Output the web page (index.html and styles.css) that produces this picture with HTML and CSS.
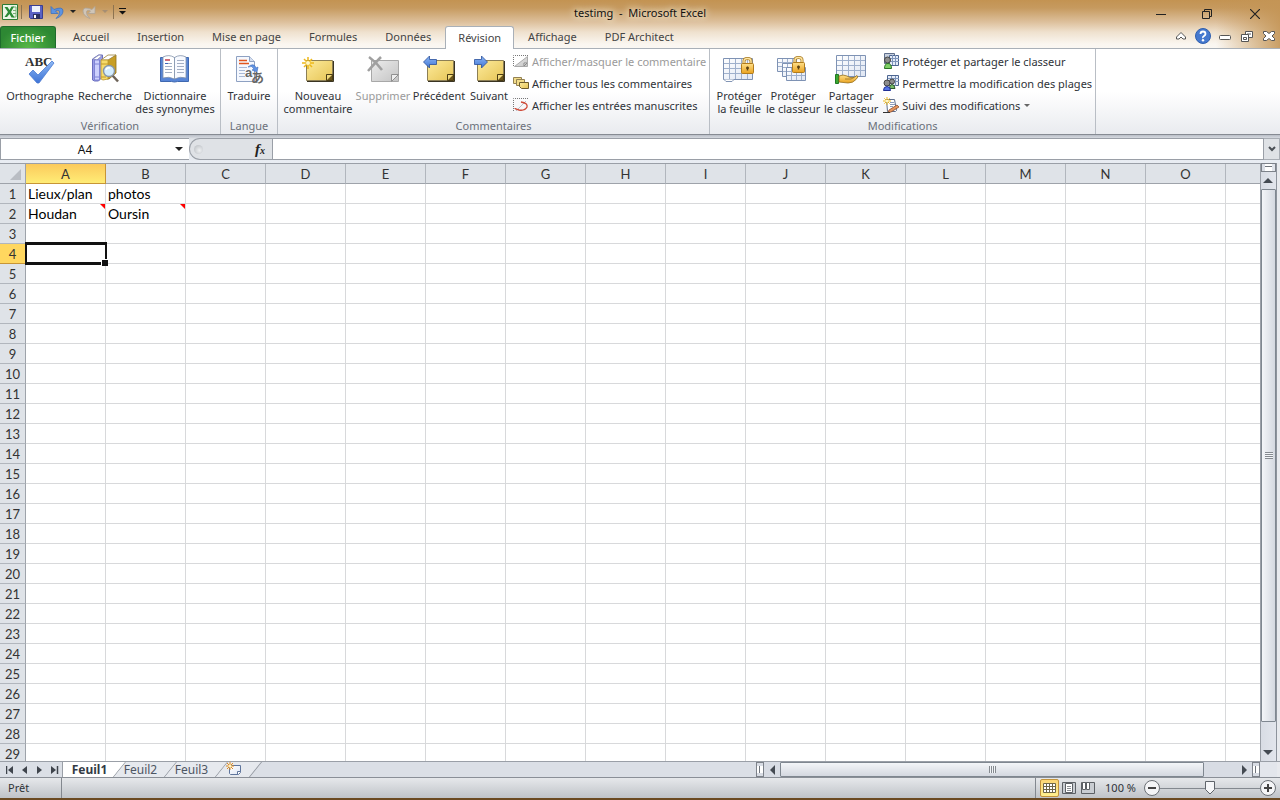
FILE: index.html
```html
<!DOCTYPE html>
<html lang="fr">
<head>
    <meta charset="UTF-8">
    <meta name="viewport" content="width=device-width, initial-scale=1.0">
    <title>testimg - Microsoft Excel</title>
    <link rel="stylesheet" href="styles.css">
</head>
<body>
    <!-- Shared shapes and gradients -->
    <svg class="defs" aria-hidden="true">
        <defs>
            <linearGradient id="noteFill" x1="0" y1="0" x2="1" y2="1">
                <stop offset="0" stop-color="#fdeb9c"/>
                <stop offset="1" stop-color="#e6c455"/>
            </linearGradient>
            <linearGradient id="greyFill" x1="0" y1="0" x2="1" y2="1">
                <stop offset="0" stop-color="#ececec"/>
                <stop offset="1" stop-color="#c4c4c4"/>
            </linearGradient>
            <linearGradient id="blueFill" x1="0" y1="0" x2="0" y2="1">
                <stop offset="0" stop-color="#8db8f4"/>
                <stop offset="1" stop-color="#3f74d6"/>
            </linearGradient>
            <linearGradient id="goldFill" x1="0" y1="0" x2="0" y2="1">
                <stop offset="0" stop-color="#ffe08a"/>
                <stop offset="1" stop-color="#e9a11e"/>
            </linearGradient>
            <linearGradient id="sheetFill" x1="0" y1="0" x2="1" y2="1">
                <stop offset="0" stop-color="#ffffff"/>
                <stop offset="1" stop-color="#dfe6f3"/>
            </linearGradient>
            <symbol id="note" viewBox="0 0 28 22">
                <path d="M.5.5h26v20H.5z" fill="url(#noteFill)" stroke="#8c7f55"/>
                <path d="M27.500 1v20.500H1" fill="none" stroke="#3a3422"/>
                <path d="M20.500 20.500v-6h6v6z" fill="#6b5519" stroke="#4b3d14"/>
                <path d="M21 15h5l-5 5z" fill="#f2da7c"/>
            </symbol>
            <symbol id="lock" viewBox="0 0 13 17">
                <path d="M3 8V4q0-2.500 3.500-2.500T10 4v4" fill="none" stroke="#a87a22" stroke-width="3"/>
                <path d="M3 8V4q0-2.500 3.500-2.500T10 4v4" fill="none" stroke="#ffe6a0" stroke-width="1.400"/>
                <rect x=".5" y="6.500" width="12" height="10" rx="1" fill="url(#goldFill)" stroke="#b27c1c"/>
                <path d="M6.500 9.500v4M5 11h3" stroke="#5b4010" stroke-width="1.500"/>
            </symbol>
            <symbol id="spark" viewBox="0 0 12 12">
                <path d="M6 0v12M0 6h12M2 2l8 8M10 2l-8 8" stroke="#edb81b" stroke-width="1.500"/>
                <circle cx="6" cy="6" r="2" fill="#fff8c8"/>
            </symbol>
            <symbol id="grid" viewBox="0 0 30 22">
                <path d="M.5.5h29v21H.5z" fill="url(#sheetFill)" stroke="#7e92b4"/>
                <path d="M1 5.500h28M1 10.500h28M1 15.500h28M6.500 1v20M12.500 1v20M18.500 1v20M24.500 1v20" stroke="#9fb0cc" fill="none"/>
            </symbol>
            <symbol id="gridSmall" viewBox="0 0 20 14">
                <path d="M.5.5h19v13H.5z" fill="url(#sheetFill)" stroke="#7e92b4"/>
                <path d="M1 4.500h18M1 8.500h18M5.500 1v12M10.500 1v12M15.500 1v12" stroke="#9fb0cc" fill="none"/>
            </symbol>
        </defs>
    </svg>

    <header class="top">
        <div class="title-bar">
            <div class="quick-access">
                <svg class="app-icon" width="16" height="16" viewBox="0 0 16 16">
                    <path d="M.5.5h15v15H.5z" fill="#eaf5e6" stroke="#2c7a33"/>
                    <path d="M11 3h3v10h-3M11 6.500h3M11 9.500h3" fill="none" stroke="#77b074"/>
                    <path d="M2.500 3h3l2 3 2-3.500h2.500L9 8l3.500 5.500h-3l-2-3.500-2.500 3H2.500L6 8z" fill="#2c8a35"/>
                </svg>
                <span class="qa-sep"></span>
                <button type="button" class="qa-btn" aria-label="Enregistrer">
                    <svg width="14" height="14" viewBox="0 0 14 14">
                        <path d="M.5.5h13v13h-12l-1-1z" fill="#5b62c4" stroke="#3a3f92"/>
                        <path d="M3 1h8v6H3z" fill="#eef2fb"/>
                        <path d="M4 9h7v5H4z" fill="#2c3060"/>
                        <path d="M5 10h2v3H5z" fill="#fff"/>
                    </svg>
                </button>
                <button type="button" class="qa-btn" aria-label="Annuler">
                    <svg width="14" height="14" viewBox="0 0 14 14">
                        <path d="M1 1.500v7h7L5.500 6q3.500-2 4 1t-3.500 6.500Q13 11 13 6T4 4.500z" fill="#5c93e2" stroke="#3f70bd" stroke-width=".8"/>
                    </svg>
                </button>
                <button type="button" class="qa-arrow" aria-label="Liste Annuler"><span class="caret"></span></button>
                <button type="button" class="qa-btn" aria-label="Répéter">
                    <svg width="14" height="14" viewBox="0 0 14 14">
                        <path d="M13 1.500v7H6L8.500 6Q5 4 4.500 7T8 13.500Q1 11 1 6t9-1.500z" fill="#cfc5b8" stroke="#aea395" stroke-width=".8"/>
                    </svg>
                </button>
                <button type="button" class="qa-arrow" aria-label="Liste Répéter"><span class="caret dim"></span></button>
                <span class="qa-sep"></span>
                <button type="button" class="qa-arrow" aria-label="Personnaliser la barre">
                    <svg width="7" height="7" viewBox="0 0 7 7"><path d="M0 .5h7" stroke="#111"/><path d="M0 3h7L3.500 6.500z" fill="#111"/></svg>
                </button>
            </div>
            <h1 class="title">testimg&nbsp; -&nbsp; Microsoft Excel</h1>
            <div class="window-controls">
                <button type="button" aria-label="Réduire">
                    <svg width="10" height="10" viewBox="0 0 10 10"><path d="M0 5.500h10" stroke="#222"/></svg>
                </button>
                <button type="button" aria-label="Restaurer">
                    <svg width="10" height="10" viewBox="0 0 10 10"><path d="M.5 2.500h7v7h-7zM2.500 2V.5h7v7H8" fill="none" stroke="#222"/></svg>
                </button>
                <button type="button" aria-label="Fermer">
                    <svg width="10" height="10" viewBox="0 0 10 10"><path d="M0 0l10 10M10 0L0 10" stroke="#222" stroke-width="1.200"/></svg>
                </button>
            </div>
        </div>

        <nav class="tabs">
            <a href="#" class="file-tab">Fichier</a>
            <a href="#">Accueil</a>
            <a href="#">Insertion</a>
            <a href="#">Mise en page</a>
            <a href="#">Formules</a>
            <a href="#">Données</a>
            <a href="#" class="active">Révision</a>
            <a href="#">Affichage</a>
            <a href="#">PDF Architect</a>
            <div class="tab-tools">
                <button type="button" aria-label="Réduire le ruban">
                    <svg width="10" height="8" viewBox="0 0 10 8"><path d="M.5 5L5 .5 9.500 5v2H7L5 5 3 7H.5z" fill="#fff" stroke="#555"/></svg>
                </button>
                <button type="button" aria-label="Aide">
                    <svg width="16" height="16" viewBox="0 0 16 16">
                        <circle cx="8" cy="8" r="7.500" fill="#4679cf" stroke="#2f5fae"/>
                        <path d="M5.500 6q0-2.500 2.500-2.500T10.500 6Q10.500 7 9 8T8 10" fill="none" stroke="#fff" stroke-width="1.800"/>
                        <circle cx="8" cy="12.200" r="1.200" fill="#fff"/>
                    </svg>
                </button>
                <button type="button" aria-label="Réduire la fenêtre">
                    <svg width="12" height="10" viewBox="0 0 12 10"><rect x=".5" y="4.500" width="11" height="4" rx="1" fill="#fff" stroke="#555"/></svg>
                </button>
                <button type="button" aria-label="Restaurer la fenêtre">
                    <svg width="12" height="11" viewBox="0 0 12 11"><path d="M4.500.5h7v6h-7z" fill="#fff" stroke="#555"/><path d="M6 3h4" stroke="#555"/><path d="M.5 3.500h7v7h-7z" fill="#fff" stroke="#555"/><path d="M2.500 6.500h3v2h-3z" fill="#fff" stroke="#555"/></svg>
                </button>
                <button type="button" aria-label="Fermer la fenêtre">
                    <svg width="12" height="10" viewBox="0 0 12 10"><path d="M.5.500h3L6 2.500 8.500.5h3v2L9 5l2.500 2.500v2h-3L6 7.500 3.500 9.500h-3v-2L3 5 .5 2.500z" fill="#fff" stroke="#555"/></svg>
                </button>
            </div>
        </nav>
    </header>

    <section class="ribbon">
        <div class="group">
            <div class="group-body">
                <button type="button" class="big w-74">
                    <svg viewBox="0 0 32 32">
                        <text x="1" y="14" class="abc">ABC</text>
                        <path d="M5 22l4-4 5 5L28 9l2 2-15 20h-2z" fill="url(#blueFill)" stroke="#4a7ad2" stroke-width=".8"/>
                    </svg>
                    <span>Orthographe</span>
                </button>
                <button type="button" class="big w-56">
                    <svg viewBox="0 0 32 32">
                        <path d="M3.500 7l6-4h4v22l-4 4h-4l-2-1z" fill="#9a9de8" stroke="#6c70c0"/>
                        <path d="M4 7l6-4 3 .5L8 8z" fill="#fff" stroke="#8488b5" stroke-width=".8"/>
                        <path d="M5.500 8h5v20h-5z" fill="#cdd1fd" stroke="#7478cb" stroke-width=".8"/>
                        <path d="M5.500 12h5M5.500 25h5" stroke="#8085d8"/>
                        <path d="M18 8l9-5v18l-7 6h-2z" fill="#c79e25" stroke="#8f6f1a" stroke-width=".8"/>
                        <path d="M12 8l7-5h8l-8 5z" fill="#fff" stroke="#9a8038" stroke-width=".8"/>
                        <path d="M12 8h7v19l-5 1-2-1z" fill="#f6db6a" stroke="#b9952c" stroke-width=".8"/>
                        <path d="M12 12h7M12 25h5" stroke="#c39a28"/>
                        <path d="M23.500 23.500l5.500 6" stroke="#6d6358" stroke-width="2.500"/>
                        <circle cx="20" cy="19" r="5.500" fill="#d3edff" stroke="#8795a5" stroke-width="1.400"/>
                        <path d="M17 18q1-3 4-2" stroke="#fff" stroke-width="1.500" fill="none"/>
                    </svg>
                    <span>Recherche</span>
                </button>
                <button type="button" class="big w-84">
                    <svg viewBox="0 0 32 32">
                        <path d="M1.500 5.500h28v24h-11l-3 .5-3-.5h-11z" fill="#5785d6" stroke="#3f68b0"/>
                        <path d="M4 5q6-3 11.500.5V27Q10 24 4 26z" fill="#fff" stroke="#8292ab" stroke-width=".8"/>
                        <path d="M27 5q-6-3-11.500.5V27Q21 24 27 26z" fill="#f8faff" stroke="#8292ab" stroke-width=".8"/>
                        <path d="M6 11.500h7M6 14.500h7M6 17.500h7M6 20.500h7M18 8.500h7M18 11.500h7M18 14.500h7M18 17.500h7M18 20.500h7" stroke="#a3afc4"/>
                        <path d="M6 8h5" stroke="#c23c4d" stroke-width="1.500"/>
                        <path d="M6 11.500h3" stroke="#3d66b8"/>
                    </svg>
                    <span>Dictionnaire<br>des synonymes</span>
                </button>
            </div>
            <div class="group-label">Vérification</div>
        </div>

        <div class="group">
            <div class="group-body">
                <button type="button" class="big w-50">
                    <svg viewBox="0 0 32 32">
                        <path d="M3.500 4.500h13l5 5v20h-18z" fill="#f5f8fe" stroke="#8ea1c2"/>
                        <path d="M16.500 4.500v5h5" fill="#d5dff0" stroke="#8ea1c2"/>
                        <path d="M6 8.500h8M6 11.500h10" stroke="#e2551d" stroke-width="1.600"/>
                        <path d="M6 15.500h8M6 18.500h6M6 21.500h6M6 24.500h6" stroke="#a9b9d6"/>
                        <path d="M15 15q6-5 8 1l2-1-1 5-5-2 2-1q-2-4-6-2z" fill="#6093e4" stroke="#3a69b9" stroke-width=".6"/>
                        <text x="12" y="25" class="glyph-a">a</text>
                        <text x="18" y="30" class="glyph-kana">あ</text>
                    </svg>
                    <span>Traduire</span>
                </button>
            </div>
            <div class="group-label">Langue</div>
        </div>

        <div class="group">
            <div class="group-body">
                <button type="button" class="big w-74">
                    <svg viewBox="0 0 32 32">
                        <use href="#note" x="4" y="8" width="28" height="22"/>
                        <use href="#spark" x="0" y="5" width="12" height="12"/>
                    </svg>
                    <span>Nouveau<br>commentaire</span>
                </button>
                <button type="button" class="big w-56" disabled>
                    <svg viewBox="0 0 32 32">
                        <path d="M4.500 8.500h27v21h-27z" fill="url(#greyFill)" stroke="#a8a8a8"/>
                        <path d="M24.500 29.500v-7h7z" fill="#eee" stroke="#909090"/>
                        <path d="M2 5q7 5 13 13M14 5Q9 10 1 19" stroke="#a0a0a0" stroke-width="2.500" fill="none"/>
                    </svg>
                    <span>Supprimer</span>
                </button>
                <button type="button" class="big w-56">
                    <svg viewBox="0 0 32 32">
                        <use href="#note" x="4" y="8" width="28" height="22"/>
                        <path d="M.5 10l6-6v3.500h7v5h-7V16z" fill="url(#blueFill)" stroke="#294f9b" stroke-width=".8"/>
                    </svg>
                    <span>Précédent</span>
                </button>
                <button type="button" class="big w-44">
                    <svg viewBox="0 0 32 32">
                        <use href="#note" x="4" y="8" width="28" height="22"/>
                        <path d="M14.500 10l-6-6v3.500h-7v5h7V16z" fill="url(#blueFill)" stroke="#294f9b" stroke-width=".8"/>
                    </svg>
                    <span>Suivant</span>
                </button>
                <div class="small-list">
                    <button type="button" class="small" disabled>
                        <svg viewBox="0 0 16 16">
                            <path d="M.5 13V2.500H15" fill="none" stroke="#777" stroke-dasharray="1 1"/>
                            <path d="M1.500 13.500l13-10v10z" fill="url(#greyFill)" stroke="#aaa"/>
                            <path d="M11 13v-3h3z" fill="#fff" stroke="#888"/>
                        </svg>
                        <span>Afficher/masquer le commentaire</span>
                    </button>
                    <button type="button" class="small">
                        <svg viewBox="0 0 16 16">
                            <path d="M.5 2.500h8v6h-8z" fill="#f3dd8a" stroke="#948253"/>
                            <path d="M3.500 4.500h8v6h-8z" fill="#f3dd8a" stroke="#948253"/>
                            <path d="M6.500 7.500h9v6h-7l-2-2z" fill="url(#noteFill)" stroke="#6d5c2b"/>
                        </svg>
                        <span>Afficher tous les commentaires</span>
                    </button>
                    <button type="button" class="small">
                        <svg viewBox="0 0 16 16">
                            <path d="M.5 14V1.500H15" fill="none" stroke="#777" stroke-dasharray="1 1"/>
                            <path d="M3 14L13 4" stroke="#b9bfc9"/>
                            <path d="M8 5q7 1 6 5-2 4-8 3-4-1-4-2" fill="none" stroke="#cf4a38" stroke-width="1.400"/>
                        </svg>
                        <span>Afficher les entrées manuscrites</span>
                    </button>
                </div>
            </div>
            <div class="group-label">Commentaires</div>
        </div>

        <div class="group">
            <div class="group-body">
                <button type="button" class="big w-52">
                    <svg viewBox="0 0 32 32">
                        <use href="#grid" x="0" y="6" width="30" height="22"/>
                        <path d="M1 27.500l2 2h6l2-2" fill="#fff" stroke="#8295b5"/>
                        <use href="#lock" x="18" y="5" width="13" height="17"/>
                    </svg>
                    <span>Protéger<br>la feuille</span>
                </button>
                <button type="button" class="big w-56">
                    <svg viewBox="0 0 32 32">
                        <use href="#gridSmall" x="0" y="6" width="20" height="14"/>
                        <use href="#gridSmall" x="5" y="11" width="20" height="14"/>
                        <use href="#gridSmall" x="9" y="15" width="20" height="14"/>
                        <use href="#lock" x="15" y="4" width="13" height="17"/>
                    </svg>
                    <span>Protéger<br>le classeur</span>
                </button>
                <button type="button" class="big w-60">
                    <svg viewBox="0 0 32 32">
                        <use href="#grid" x="1" y="3" width="30" height="22"/>
                        <path d="M.5 22.500h3v9h-3z" fill="#3aa832" stroke="#1f7a22"/>
                        <path d="M4 24q4-2 8 0l3 1.500h4l3-2q2 1-1 4-3 3.500-8 3.500l-9-1z" fill="url(#goldFill)" stroke="#94701f" stroke-width=".8"/>
                        <path d="M10 27h6l3-1.500" fill="none" stroke="#94701f" stroke-width=".8"/>
                    </svg>
                    <span>Partager<br>le classeur</span>
                </button>
                <div class="small-list">
                    <button type="button" class="small">
                        <svg viewBox="0 0 16 16">
                            <path d="M1.500.5h10v10h-10z" fill="#c6cfdd" stroke="#5f6f8c"/>
                            <path d="M6.500 2.500h9v10h-9z" fill="#e5ecf8" stroke="#4c6590"/>
                            <path d="M6 5.500h10M6 8.500h10M9.500 2v10M12.500 2v10" stroke="#7d94ba"/>
                            <circle cx="4.500" cy="7" r="3" fill="#8d8d8d" stroke="#444"/>
                            <path d="M1.500 15.500q0-5 3.500-5t3.500 5z" fill="#7fd065" stroke="#2b7424"/>
                        </svg>
                        <span>Protéger et partager le classeur</span>
                    </button>
                    <button type="button" class="small">
                        <svg viewBox="0 0 16 16">
                            <path d="M4.500.5h11v10h-11z" fill="#e5ecf8" stroke="#4c6590"/>
                            <path d="M5 3.500h11M5 6.500h11M8.500 1v10M12.500 1v10" stroke="#7d94ba"/>
                            <circle cx="9" cy="6.500" r="2.500" fill="#8d8d8d" stroke="#444"/>
                            <path d="M6.500 13.500q0-4 2.500-4t3 4z" fill="#79bd6a" stroke="#2d5a2b"/>
                            <circle cx="4" cy="8" r="3" fill="#8d8d8d" stroke="#444"/>
                            <path d="M.5 15.500q0-4 3.500-4t3.500 4z" fill="#5576e6" stroke="#1f2f96"/>
                        </svg>
                        <span>Permettre la modification des plages</span>
                    </button>
                    <button type="button" class="small">
                        <svg viewBox="0 0 16 16">
                            <path d="M3.500 2.500h8l2 11-1 1h-8z" fill="#fff" stroke="#5f6f8c"/>
                            <path d="M7 5.500h4M7 7.500h5M7 9.500h3" stroke="#8c9dbb"/>
                            <path d="M6 13l8-5 2 2-8 5-3 .5z" fill="#e5955d" stroke="#8d4f2c" stroke-width=".8"/>
                            <use href="#spark" x="0" y="0" width="8" height="8"/>
                            <path d="M0 15.500h7" stroke="#333"/>
                        </svg>
                        <span>Suivi des modifications</span>
                        <span class="caret grey"></span>
                    </button>
                </div>
            </div>
            <div class="group-label">Modifications</div>
        </div>
    </section>

    <div class="formula-bar">
        <div class="name-box">
            <input type="text" value="A4" aria-label="Zone Nom">
            <button type="button" aria-label="Liste des noms"><span class="caret"></span></button>
        </div>
        <div class="fx-area">
            <span class="fx-grip"></span>
            <button type="button" class="fx" aria-label="Insérer une fonction">f<small>x</small></button>
        </div>
        <input type="text" class="formula" aria-label="Barre de formule">
        <button type="button" class="expand" aria-label="Développer">
            <svg width="8" height="6" viewBox="0 0 8 6"><path d="M1 1l3 3 3-3" fill="none" stroke="#4a4f55" stroke-width="2"/></svg>
        </button>
    </div>

    <main class="workbook">
        <div class="sheet" id="sheet">
            <table>
                <thead id="sheet-head"></thead>
                <tbody id="sheet-body"></tbody>
            </table>
        </div>
        <div class="v-scroll">
            <span class="split-h"></span>
            <button type="button" aria-label="Haut"><span class="arrow up"></span></button>
            <div class="v-track"><div class="v-thumb"><span class="grip-v"></span></div></div>
            <button type="button" aria-label="Bas"><span class="arrow down"></span></button>
        </div>
    </main>

    <div class="sheet-bar">
        <div class="sheet-tabs">
            <div class="sheet-nav">
                <button type="button" aria-label="Première feuille"><svg width="8" height="8" viewBox="0 0 8 8"><path d="M.5 0v8" stroke="#3f444c" stroke-width="1.500"/><path d="M7 0v8L2 4z" fill="#3f444c"/></svg></button>
                <button type="button" aria-label="Feuille précédente"><svg width="8" height="8" viewBox="0 0 8 8"><path d="M6 0v8L1 4z" fill="#3f444c"/></svg></button>
                <button type="button" aria-label="Feuille suivante"><svg width="8" height="8" viewBox="0 0 8 8"><path d="M1 0v8l5-4z" fill="#3f444c"/></svg></button>
                <button type="button" aria-label="Dernière feuille"><svg width="8" height="8" viewBox="0 0 8 8"><path d="M0 0v8l5-4z" fill="#3f444c"/><path d="M6.500 0v8" stroke="#3f444c" stroke-width="1.500"/></svg></button>
            </div>
            <a href="#" class="sheet-tab active">Feuil1</a>
            <a href="#" class="sheet-tab">Feuil2</a>
            <a href="#" class="sheet-tab">Feuil3</a>
            <a href="#" class="sheet-tab new" aria-label="Insérer une feuille">
                <svg width="16" height="14" viewBox="0 0 16 14">
                    <path d="M3.500 3.500h11v7l-2 2h-8l-1-1z" fill="url(#sheetFill)" stroke="#5f759c"/>
                    <path d="M14.500 9.500h-3v3" fill="#fff" stroke="#5f759c"/>
                    <path d="M4 0v8M0 4h8M1 1l6 6M7 1L1 7" stroke="#e08a1c"/>
                    <circle cx="4" cy="4" r="1.500" fill="#fff3c0"/>
                </svg>
            </a>
        </div>
        <div class="h-scroll">
            <span class="split-v"></span>
            <button type="button" aria-label="Gauche"><span class="arrow left"></span></button>
            <div class="h-track"><div class="h-thumb"><span class="grip-h"></span></div></div>
            <button type="button" aria-label="Droite"><span class="arrow right"></span></button>
            <span class="split-v"></span>
        </div>
        <span class="corner"></span>
    </div>

    <footer class="status-bar">
        <span class="status-text">Prêt</span>
        <div class="status-tools">
            <button type="button" class="view active" aria-label="Normal">
                <svg width="13" height="11" viewBox="0 0 13 11"><path d="M.5.5h12v9H.5zM0 3.500h13M0 6.500h13M3.500 0v10M6.500 0v10M9.500 0v10" fill="#fff" stroke="#6e6648"/></svg>
            </button>
            <button type="button" class="view" aria-label="Mise en page">
                <svg width="14" height="12" viewBox="0 0 14 12"><path d="M.5.5h13v11H.5z" fill="#c9cdd2" stroke="#5c6065"/><path d="M3.500 1.500h7v9h-7z" fill="#fff" stroke="#5c6065"/><path d="M5 4.500h4M5 6.500h4M5 8.500h4" stroke="#8a8e93"/></svg>
            </button>
            <button type="button" class="view" aria-label="Aperçu des sauts de page">
                <svg width="14" height="12" viewBox="0 0 14 12"><path d="M.5.5h13v11H.5z" fill="#c9cdd2" stroke="#5c6065"/><path d="M1.500.5h3v7h-3zM5.500.5h3v7h-3z" fill="#fff" stroke="#5c6065"/></svg>
            </button>
            <label class="zoom-label" for="zoom">100 %</label>
            <button type="button" class="round" aria-label="Zoom arrière">
                <svg width="16" height="16" viewBox="0 0 16 16"><circle cx="8" cy="8" r="7.500" fill="#f4f5f7" stroke="#6b7076"/><path d="M4 8h8" stroke="#444" stroke-width="2"/></svg>
            </button>
            <input type="range" id="zoom" min="0" max="200" value="100">
            <button type="button" class="round" aria-label="Zoom avant">
                <svg width="16" height="16" viewBox="0 0 16 16"><circle cx="8" cy="8" r="7.500" fill="#f4f5f7" stroke="#6b7076"/><path d="M4 8h8M8 4v8" stroke="#444" stroke-width="2"/></svg>
            </button>
        </div>
    </footer>

    <script src="script.js"></script>
</body>
</html>
```

FILE: styles.css
```css
* {
    margin: 0;
    padding: 0;
    box-sizing: border-box;
}

body {
    display: flex;
    flex-direction: column;
    height: 100vh;
    overflow: hidden;
    background: #dfe3e8;
    color: #2f3338;
    font-family: "Noto Sans", "Open Sans", sans-serif;
    font-size: 11px;
}

button,
input {
    border: none;
    background: none;
    color: inherit;
    font: inherit;
    outline: none;
}

button {
    display: flex;
    align-items: center;
    justify-content: center;
}

a {
    color: inherit;
    text-decoration: none;
}

svg {
    display: block;
    flex: none;
}

.defs {
    position: absolute;
    width: 0;
    height: 0;
}

.caret {
    border: 3px solid transparent;
    border-top-color: #222;
    border-bottom: none;
}

.caret.dim {
    border-top-color: #a68e72;
}

.caret.grey {
    border-top-color: #666;
    margin-left: 4px;
}

/* Title bar and tabs */
.top {
    flex: none;
    background:
        linear-gradient(to right, rgba(196, 149, 86, 0) calc(100% - 64px), rgba(196, 149, 86, 0.9)),
        linear-gradient(#c39352 0, #c69a5f 8px, #ddc09c 22px, #efe1ce 32px, #faf6f0 44px, #faf7f2 48px);
}

.title-bar {
    display: grid;
    grid-template-columns: 1fr auto 1fr;
    height: 26px;
}

.quick-access {
    display: flex;
    align-items: center;
    padding: 0 2px 3px;
}

.qa-sep {
    width: 1px;
    height: 14px;
    margin: 0 3px;
    background: #8d7350;
}

.qa-btn {
    width: 21px;
    height: 22px;
}

.qa-arrow {
    width: 11px;
    height: 22px;
}

.title {
    padding: 0 8px;
    color: #111;
    font-size: 11px;
    font-weight: 400;
    line-height: 26px;
    text-shadow: 0 0 6px #fff3e0, 0 0 10px #fff3e0;
}

.window-controls {
    display: flex;
    justify-content: flex-end;
    padding-top: 2px;
}

.window-controls button {
    width: 46px;
    height: 24px;
}

.window-controls button:last-child {
    width: 50px;
}

.tabs {
    display: flex;
    height: 23px;
    border-bottom: 1px solid #a9b0b8;
    color: #444;
    line-height: 22px;
}

.tabs a {
    padding: 0 14px;
}

.tabs .file-tab {
    width: 56px;
    margin-right: 3px;
    padding: 0;
    border: 1px solid #1e6b2c;
    border-bottom: none;
    border-radius: 3px 3px 0 0;
    background: radial-gradient(ellipse at bottom, #58b847, #2d8833 75%);
    color: #fff;
    font-weight: 500;
    line-height: 21px;
    text-align: center;
}

.tabs .active {
    height: 23px;
    padding: 0 12px;
    border: 1px solid #a9b0b8;
    border-bottom: none;
    border-radius: 3px 3px 0 0;
    background: #fff;
    line-height: 21px;
}

.tab-tools {
    display: flex;
    margin-left: auto;
    padding-bottom: 2px;
}

.tab-tools button {
    width: 22px;
}

/* Ribbon */
.ribbon {
    display: flex;
    flex: none;
    height: 86px;
    border-bottom: 1px solid #868b93;
    background: linear-gradient(#fff 0, #fff 50%, #e9ebef);
}

.group {
    display: flex;
    flex-direction: column;
    padding: 1px 3px 0;
    border-right: 1px solid #b9bec5;
}

.group-body {
    display: flex;
    flex: 1;
    align-items: flex-start;
}

.big {
    flex-direction: column;
    justify-content: flex-start;
    padding-top: 2px;
    line-height: 13px;
    white-space: nowrap;
}

.big svg {
    width: 32px;
    height: 32px;
    margin-bottom: 5px;
}

.w-44 { width: 44px; }
.w-50 { width: 50px; }
.w-52 { width: 52px; }
.w-56 { width: 56px; }
.w-60 { width: 60px; }
.w-74 { width: 74px; }
.w-84 { width: 84px; }

.small-list {
    display: flex;
    flex-direction: column;
}

.small {
    justify-content: flex-start;
    height: 22px;
    padding-left: 2px;
    white-space: nowrap;
}

.small svg {
    width: 16px;
    height: 16px;
    margin-right: 3px;
}

button:disabled {
    color: #9a9a9a;
}

.group-label {
    height: 17px;
    color: #6a707a;
    line-height: 17px;
    text-align: center;
}

.abc {
    fill: #333;
    font: bold 13px "Liberation Serif", serif;
}

.glyph-a {
    fill: #666;
    font: bold 13px "Liberation Sans", sans-serif;
}

.glyph-kana {
    fill: #666;
    font: bold 13px "Noto Sans CJK JP", sans-serif;
}

/* Formula bar */
.formula-bar {
    display: flex;
    flex: none;
    height: 28px;
    padding: 3px 0;
    background: linear-gradient(#b9bec7, #dfe3e8 4px, #e9edf3);
}

.name-box,
.formula {
    border: 1px solid #9a9fa7;
    background: #fff;
}

.name-box {
    display: flex;
    width: 189px;
    border-right: none;
}

.name-box input {
    flex: 1;
    min-width: 0;
    color: #111;
    font-size: 12px;
    text-align: center;
}

.name-box button {
    width: 20px;
}

.name-box .caret {
    border-width: 4px;
    border-bottom: none;
}

.fx-area {
    display: flex;
    align-items: center;
    justify-content: space-between;
    width: 83px;
    border: 1px solid #9a9fa7;
    border-right: none;
    border-radius: 11px 0 0 11px;
    background: #dfe2e6;
}

.fx-grip {
    width: 9px;
    height: 9px;
    margin-left: 4px;
    border-radius: 50%;
    background: radial-gradient(circle at 60% 60%, #eef0f2, #b5b9be);
}

.fx {
    width: 24px;
    color: #222;
    font: italic bold 15px/16px "Liberation Serif", serif;
}

.fx small {
    padding-top: 4px;
    font-size: 10px;
}

.formula {
    flex: 1;
    min-width: 0;
    padding: 0 4px;
    color: #111;
    font-size: 12px;
}

.expand {
    width: 16px;
    border: 1px solid #a9aeb5;
    border-left: none;
    background: #dfe2e6;
}

/* Grid */
.workbook {
    display: flex;
    flex: 1;
    min-height: 0;
}

.sheet {
    flex: 1;
    overflow: hidden;
    border-top: 1px solid #9a9fa7;
    background: #fff;
}

.sheet table {
    width: max-content;
    border-collapse: separate;
    border-spacing: 0;
    table-layout: fixed;
    color: #000;
    font-family: Lato, "Open Sans", sans-serif;
    font-size: 14px;
    line-height: 18px;
}

.sheet th {
    width: 80px;
    min-width: 80px;
    height: 20px;
    padding-top: 1px;
    border-right: 1px solid #b1b6bd;
    border-bottom: 1px solid #9ea3aa;
    background: #dfe3e8;
    color: #333;
    font-size: 13px;
    font-weight: 400;
    text-align: center;
}

.sheet tr > :first-child {
    width: 26px;
    min-width: 26px;
    border-right-color: #9ea3aa;
}

.sheet tbody th {
    border-bottom-color: #b1b6bd;
}

.sheet thead th.selected {
    border-color: #c79536;
    background: linear-gradient(#fbca5c, #ffec76);
}

.sheet tbody th.selected {
    border-color: #c79536;
    background: #ffd75f;
}

.sheet td {
    position: relative;
    height: 20px;
    padding-left: 2px;
    border-right: 1px solid #d8d9db;
    border-bottom: 1px solid #d8d9db;
    white-space: nowrap;
}

.select-all {
    width: 0;
    height: 0;
    margin-left: auto;
    margin-right: 4px;
    border-left: 11px solid transparent;
    border-bottom: 11px solid #b9bdc3;
}

td.has-note::after {
    content: "";
    position: absolute;
    top: 0;
    right: 0;
    border-top: 5px solid #f00;
    border-left: 5px solid transparent;
}

td.current::before {
    content: "";
    position: absolute;
    inset: -2px;
    left: -1px;
    z-index: 1;
    border: 2px solid #111;
    border-width: 3px 2px;
}

td.current::after {
    content: "";
    position: absolute;
    right: -3px;
    bottom: -3px;
    z-index: 2;
    width: 6px;
    height: 6px;
    border: 1px solid #fff;
    border-width: 1px 0 0 1px;
    background: #111;
}

/* Scroll bars */
.v-scroll {
    display: flex;
    flex-direction: column;
    width: 20px;
    border-right: 3px solid #e8eaee;
    border-left: 1px solid #9a9fa7;
    background: linear-gradient(to right, #d8dce4, #e3e6ed);
    box-shadow: inset -1px 0 #8d939c;
}

.v-scroll button,
.h-scroll button {
    flex: none;
    width: 16px;
    height: 17px;
}

.v-scroll button {
    width: 14px;
}

.h-scroll button {
    height: 15px;
}

.split-h,
.split-v {
    flex: none;
    border: 1px solid #7d828a;
    background: linear-gradient(#fff 2px, #70757d 2px, #70757d 3px, #fff 3px) content-box #fff;
}

.split-h {
    width: 15px;
    height: 9px;
    padding: 0 3px;
}

.split-v {
    width: 8px;
    height: 15px;
    padding: 3px 0;
    background: linear-gradient(to right, #fff 2px, #70757d 2px, #70757d 3px, #fff 3px) content-box #fff;
}

.v-track,
.h-track {
    flex: 1;
}

.v-thumb,
.h-thumb {
    display: flex;
    align-items: center;
    justify-content: center;
    border: 1px solid #7f8790;
    border-radius: 1px;
}

.v-thumb {
    width: 15px;
    height: 96%;
    background: linear-gradient(to right, #f3f5f8, #d4d8e0);
}

.grip-v {
    width: 8px;
    height: 7px;
    background: repeating-linear-gradient(#858a90 0, #858a90 1px, #f3f5f8 1px, #f3f5f8 2px);
}

.grip-h {
    width: 7px;
    height: 7px;
    background: repeating-linear-gradient(to right, #858a90 0, #858a90 1px, #f3f5f8 1px, #f3f5f8 2px);
}

.arrow {
    border: 5px solid transparent;
}

.arrow.up {
    border-top: none;
    border-bottom-color: #444a52;
}

.arrow.down {
    border-bottom: none;
    border-top-color: #444a52;
}

.arrow.left {
    border-left: none;
    border-right-color: #444a52;
}

.arrow.right {
    border-right: none;
    border-left-color: #444a52;
}

/* Sheet tabs */
.sheet-bar {
    display: flex;
    flex: none;
    height: 17px;
    border-top: 1px solid #9a9fa7;
    border-bottom: 1px solid #8a8f97;
    background: #dbdfe6;
}

.sheet-tabs {
    display: flex;
    flex: 3;
    color: #4d5663;
    font-size: 12px;
    line-height: 15px;
}

.sheet-nav {
    display: flex;
    width: 63px;
    padding-left: 2px;
    border-right: 1px solid #9a9fa7;
}

.sheet-nav button {
    width: 15px;
}

.sheet-tab {
    position: relative;
    z-index: 1;
    width: 63px;
    margin-right: -12px;
    padding-right: 10px;
    text-align: center;
}

.sheet-tab::before {
    content: "";
    position: absolute;
    inset: 0;
    z-index: -1;
    background: #e6e9ee;
    clip-path: polygon(12px 0, 100% 0, calc(100% - 12px) 100%, 0 100%);
}

.sheet-tab::after {
    content: "";
    position: absolute;
    top: 0;
    right: 6px;
    width: 1px;
    height: 15px;
    background: #8d939c;
    transform: skewX(-39deg);
}

.sheet-tab.active {
    color: #333a45;
    font-weight: 700;
}

.sheet-tab.active::before {
    background: #fff;
    clip-path: polygon(0 0, 100% 0, calc(100% - 12px) 100%, 0 100%);
}

.sheet-tab.new {
    display: flex;
    justify-content: center;
    width: 46px;
}

.h-scroll {
    display: flex;
    flex: 2;
    background: #d8dce4;
}

.h-thumb {
    width: 93%;
    height: 15px;
    background: linear-gradient(#f3f5f8, #d4d8e0);
}

.corner {
    width: 20px;
    border-right: 3px solid #e8eaee;
    background: #e3e6ec;
}

/* Status bar */
.status-bar {
    display: flex;
    flex: none;
    justify-content: space-between;
    height: 22px;
    border-bottom: 2px solid #6b4a22;
    background: linear-gradient(#e6e8eb, #bfc3c8);
    line-height: 20px;
}

.status-text {
    width: 62px;
    padding-left: 8px;
    border-right: 1px solid #83888f;
}

.status-tools {
    display: flex;
    align-items: center;
    padding: 0 4px;
    border-left: 1px solid #83888f;
}

.view {
    width: 19px;
    height: 18px;
}

.view.active {
    border: 1px solid #c2933c;
    border-radius: 2px;
    background: linear-gradient(#fbd574, #fff08e);
}

.zoom-label {
    width: 47px;
    text-align: center;
}

.round {
    width: 16px;
}

#zoom {
    width: 100px;
    height: 18px;
    appearance: none;
    background: linear-gradient(#83888f, #83888f) center / 100% 1px no-repeat;
}

#zoom::-webkit-slider-thumb {
    appearance: none;
    width: 10px;
    height: 14px;
    background: url("data:image/svg+xml;charset=UTF-8,%3csvg xmlns='http://www.w3.org/2000/svg' viewBox='0 0 10 14'%3e%3cpath d='M.5.5h9v8l-4.500 4.500L.5 8.500z' fill='%23f5f6f8' stroke='%235f646b'/%3e%3c/svg%3e") no-repeat;
}
```

FILE: script.js
```js
const values = {
    A1: 'Lieux/plan',
    B1: 'photos',
    A2: 'Houdan',
    B2: 'Oursin'
};
const notes = ['A2', 'B2'];
const current = { col: 'A', row: 4 };

// Fill the visible area with cells
function drawSheet() {
    const sheet = document.getElementById('sheet');
    const head = document.getElementById('sheet-head');
    const body = document.getElementById('sheet-body');
    const space = (sheet.clientWidth - 26) / 80;
    const colCount = Math.min(26, Math.ceil(space));
    const rowCount = Math.ceil((sheet.clientHeight - 20) / 20);
    const cols = [];
    for (let i = 0; i < colCount; i++) {
        cols.push(String.fromCharCode(65 + i));
    }

    // a column that is less than half visible gets no letter
    head.innerHTML = '<tr><th><div class="select-all"></div></th>' + cols.map((col, i) =>
        `<th class="${col === current.col ? 'selected' : ''}">${i + 0.5 < space ? col : ''}</th>`).join('') + '</tr>';

    let rows = '';
    for (let row = 1; row <= rowCount; row++) {
        rows += `<tr><th class="${row === current.row ? 'selected' : ''}">${row}</th>`;
        for (const col of cols) {
            const key = col + row;
            let name = '';
            if (notes.includes(key)) name = 'has-note';
            if (col === current.col && row === current.row) name = 'current';
            rows += `<td class="${name}">${values[key] || ''}</td>`;
        }
        rows += '</tr>';
    }
    body.innerHTML = rows;
}

drawSheet();
window.addEventListener('resize', drawSheet);
```
